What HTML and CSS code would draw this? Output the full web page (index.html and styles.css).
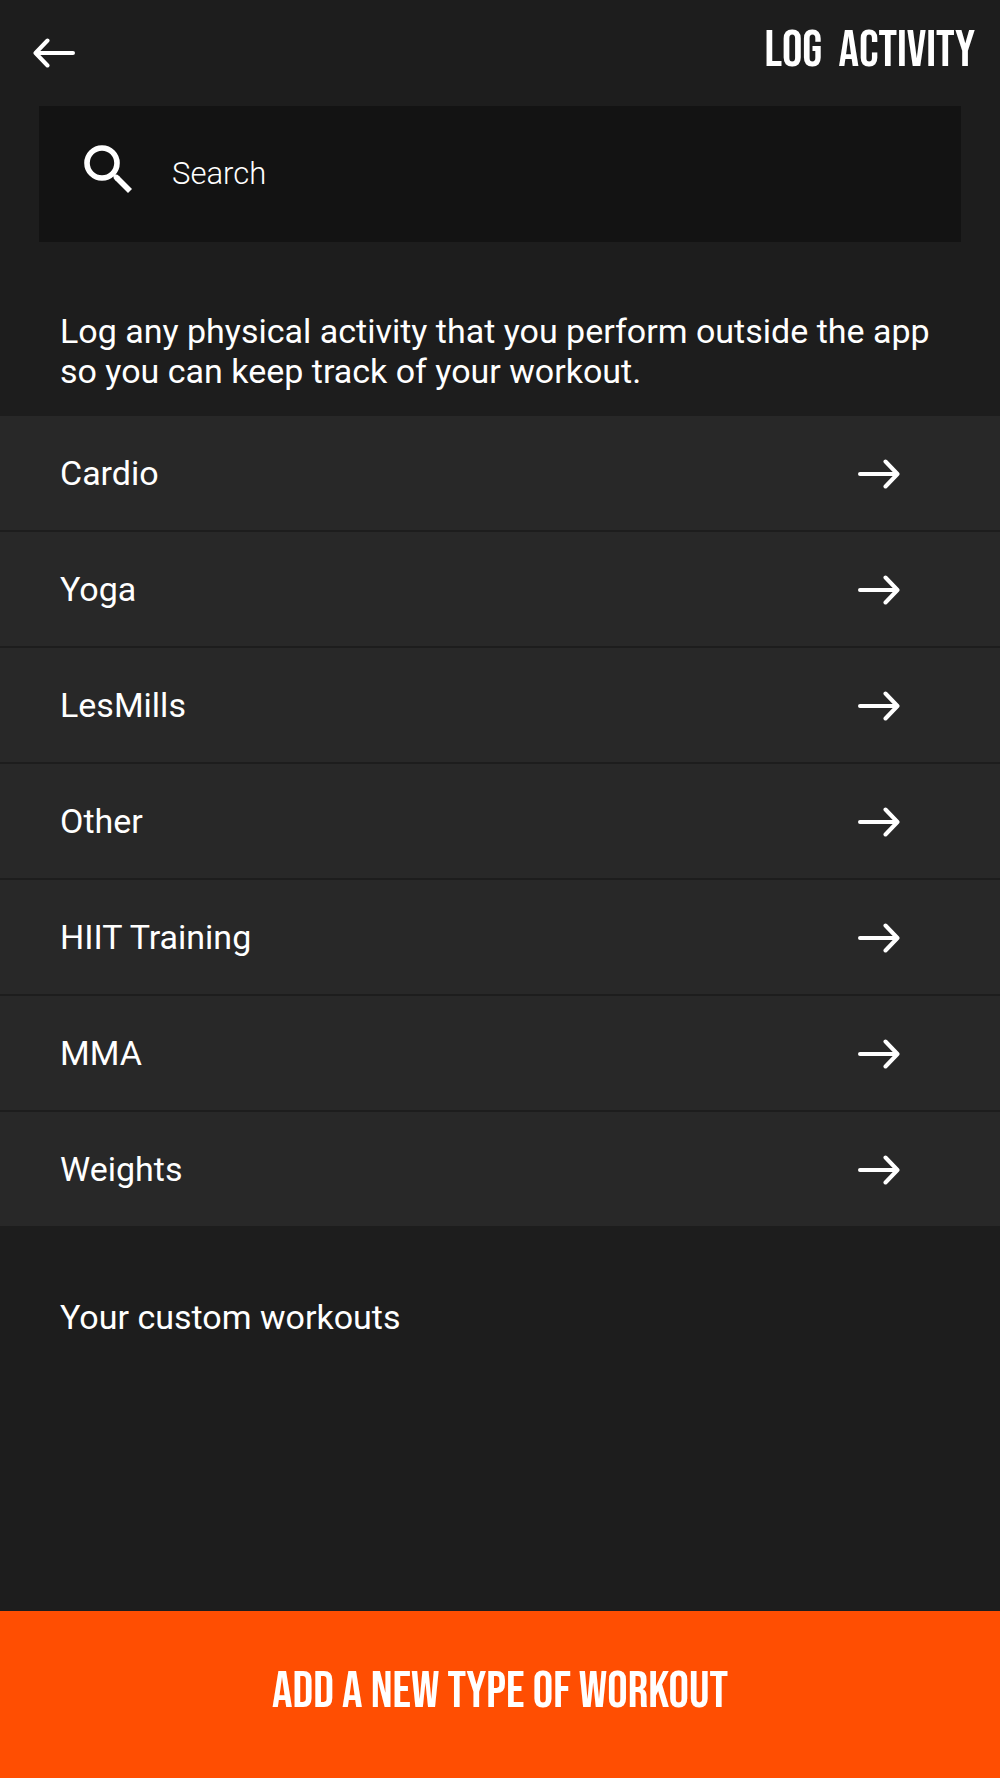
FILE: index.html
```html
<!DOCTYPE html>
<html lang="en">
<head>
<meta charset="utf-8">
<meta name="viewport" content="width=device-width, initial-scale=1">
<title>Log Activity</title>
<link rel="stylesheet" href="styles.css">
</head>
<body>
<svg class="sprite" aria-hidden="true">
  <symbol id="arrow" viewBox="0 0 42 30">
    <path d="M2 15H39M27.500 2.500L39.500 15L27.500 27.500" fill="none" stroke="currentColor" stroke-width="4" stroke-linecap="round" stroke-linejoin="round"/>
  </symbol>
</svg>
<div class="screen">
  <header class="topbar">
    <button class="back" type="button" aria-label="Back"><svg class="arrow arrow-left"><use href="#arrow"/></svg></button>
    <h1 class="display">LOG&nbsp; ACTIVITY</h1>
  </header>
  <main class="content">
    <label class="search">
      <svg class="search-icon" viewBox="0 0 48 48" aria-hidden="true">
        <circle cx="18" cy="18" r="15" fill="none" stroke="currentColor" stroke-width="5.600"/>
        <path d="M32.500 32.500L33 33" stroke="currentColor" stroke-width="5.600" stroke-linecap="round"/>
        <path d="M29 29L32 32" stroke="currentColor" stroke-width="3"/>
        <path d="M33 33L46 46" stroke="currentColor" stroke-width="5.600"/>
      </svg>
      <input class="search-input" type="search" placeholder="Search" aria-label="Search">
    </label>
    <p class="intro">Log any physical activity that you perform outside the app so you can keep track of your workout.</p>
    <ul class="list">
      <li><a class="row" href="#cardio">Cardio<svg class="arrow"><use href="#arrow"/></svg></a></li>
      <li><a class="row" href="#yoga">Yoga<svg class="arrow"><use href="#arrow"/></svg></a></li>
      <li><a class="row" href="#lesmills">LesMills<svg class="arrow"><use href="#arrow"/></svg></a></li>
      <li><a class="row" href="#other">Other<svg class="arrow"><use href="#arrow"/></svg></a></li>
      <li><a class="row" href="#hiit">HIIT Training<svg class="arrow"><use href="#arrow"/></svg></a></li>
      <li><a class="row" href="#mma">MMA<svg class="arrow"><use href="#arrow"/></svg></a></li>
      <li><a class="row" href="#weights">Weights<svg class="arrow"><use href="#arrow"/></svg></a></li>
    </ul>
    <h2 class="custom">Your custom workouts</h2>
  </main>
  <button class="add display" type="button">ADD A NEW TYPE OF WORKOUT</button>
</div>
</body>
</html>
```
FILE: styles.css
```css
* { box-sizing: border-box; }

body {
  margin: 0;
  background: #1d1d1d;
  color: #fff;
  font: 400 34px/40px Roboto, "Noto Sans", sans-serif;
}

.sprite { position: absolute; width: 0; height: 0; }

.screen {
  display: flex;
  flex-direction: column;
  min-height: 100vh;
}

.topbar {
  display: flex;
  align-items: center;
  justify-content: space-between;
  padding: 0 25px 0 33px;
  height: 106px;
}

.display {
  margin: 0;
  font: 400 51px/56px "Bebas Neue", "Roboto Condensed", "Liberation Sans Narrow", "Liberation Sans", sans-serif;
}

.topbar .display { padding-bottom: 4px; }

.back {
  display: flex;
  padding: 0;
  border: 0;
  background: none;
  color: inherit;
}

.arrow { width: 42px; height: 30px; }
.arrow-left { transform: scaleX(-1); }

.content { flex: 1; }

.search {
  display: flex;
  align-items: center;
  gap: 40px;
  height: 136px;
  margin: 0 39px;
  padding: 0 45px;
  background: #131313;
}

.search-icon {
  flex: none;
  width: 48px;
  height: 48px;
  margin-bottom: 10px;
}

.search-input {
  flex: 1;
  min-width: 0;
  height: 48px;
  margin-bottom: 2px;
  padding: 0;
  border: 0;
  outline: 0;
  background: none;
  color: inherit;
  font: 300 31px/40px Roboto, "Noto Sans", sans-serif;
}

.search-input::placeholder { color: #fff; opacity: 1; }

.intro {
  margin: 0;
  padding: 69px 60px 25px;
}

.list {
  display: grid;
  gap: 2px;
  margin: 0;
  padding: 0;
  list-style: none;
}

.row {
  display: flex;
  align-items: center;
  justify-content: space-between;
  height: 114px;
  padding: 0 100px 0 60px;
  background: #282828;
  color: inherit;
  text-decoration: none;
}

.row .arrow { margin-top: 2px; }

.custom {
  margin: 0;
  padding: 71px 60px 40px;
  font: inherit;
}

.add {
  width: 100%;
  height: 167px;
  padding: 0 24px 6px;
  border: 0;
  background: #ff4e02;
  color: inherit;
}
```
